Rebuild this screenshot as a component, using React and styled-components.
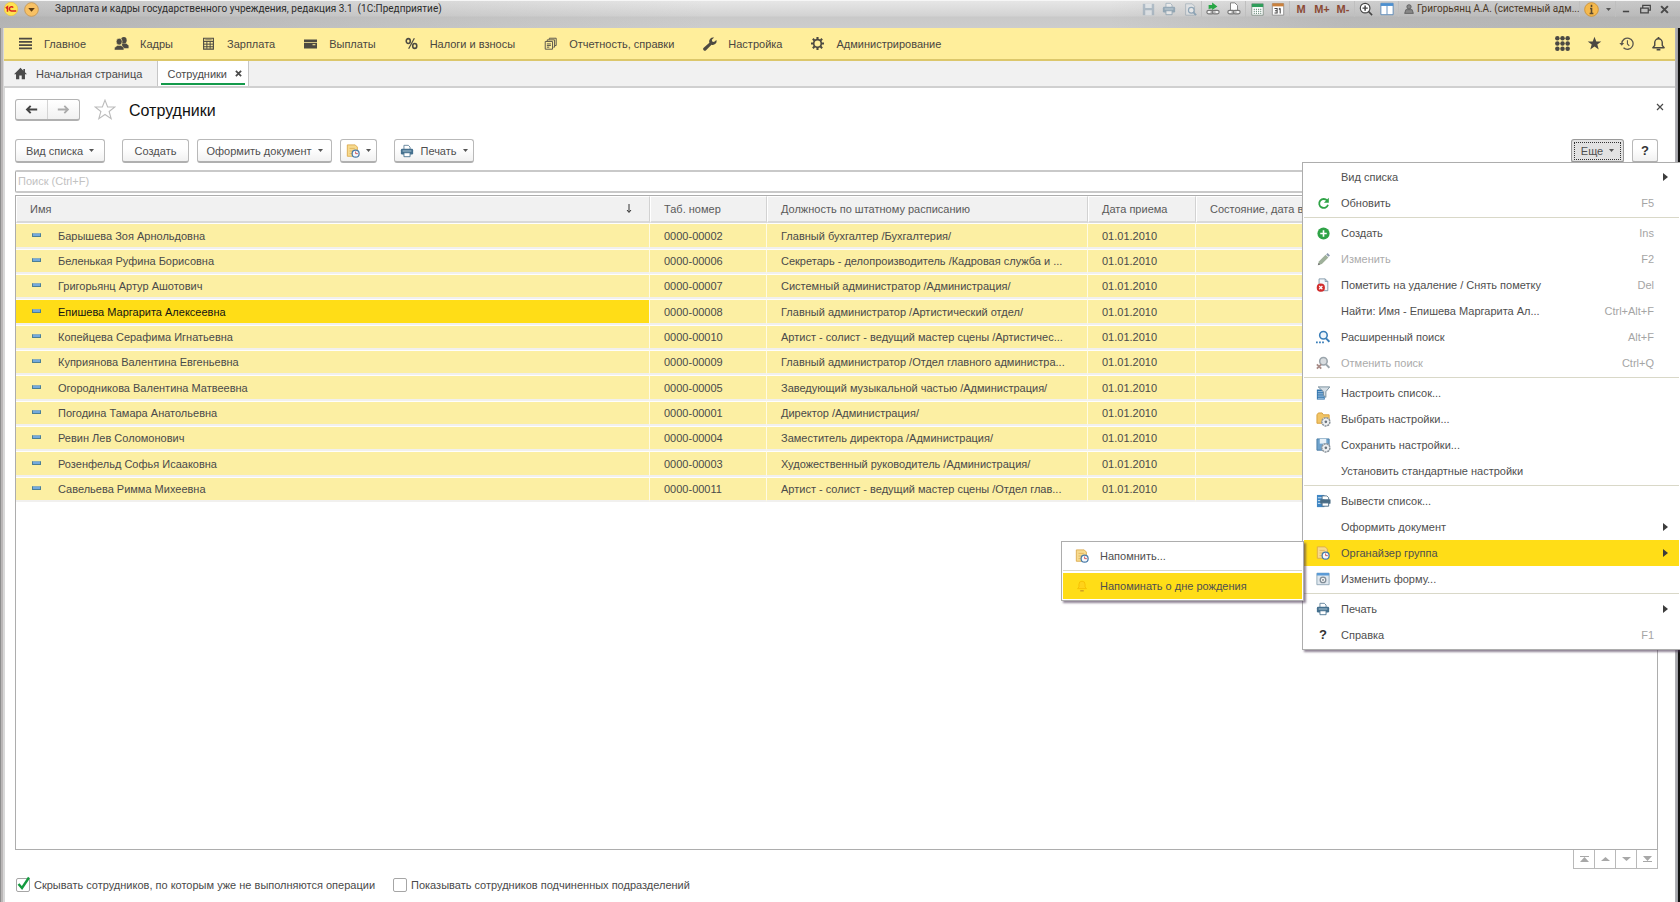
import React from "react";
import styled, { createGlobalStyle, css } from "styled-components";

const GlobalStyle = createGlobalStyle`
  *, *::before, *::after { box-sizing: border-box; }
  body {
    margin: 0;
    background: #fff;
    color: #4a4a4a;
    font: 11px/16px "Liberation Sans", Arial, sans-serif;
  }
  button, input { font: inherit; color: inherit; }
  svg { display: block; flex: none; }
`;

/* ---------- window frame ---------- */

const Window = styled.div`
  display: flex;
  flex-direction: column;
  min-height: 100vh;
  overflow: hidden;
  background: linear-gradient(90deg, #8d8d8d 1px, #bab7b7 1px, #bab7b7 3px, #d8d8d8 3px, #d8d8d8 5px,
    transparent 5px, transparent calc(100% - 5px), #b4b4b8 calc(100% - 5px), #9c9ca2 calc(100% - 2px), #111 calc(100% - 2px)), #fff;
`;

const TitleBar = styled.header`
  display: flex;
  align-items: flex-start;
  height: 28px;
  padding: 0 6px 0 4px;
  border-top: 1px solid #f6f6f6;
  background:
    linear-gradient(90deg, rgba(120, 120, 120, .28), rgba(160, 160, 160, .14) 30%, transparent 42%, transparent 66%, rgba(120, 120, 120, .22) 80%, rgba(120, 120, 120, .28)),
    linear-gradient(#e6e6e6, #dcdcdc 8px, #d2d2d2 15px, #c9c9c9 16px, #cdcdcd);
`;

const TitleLead = styled.div`
  display: flex;
  align-items: center;
  gap: 5px;
  height: 16px;
`;

const TitleText = styled.h1`
  margin: 0 auto 0 8px;
  padding-left: 8px;
  color: #2c2c2c;
  font-family: Roboto, "Liberation Sans", sans-serif;
  font-size: 10px;
  font-weight: 400;
  line-height: 16px;
  white-space: pre;
`;

const TitleGroup = styled.div`
  display: flex;
  align-items: center;
  gap: 1px;
  height: 16px;
  padding: 0 1px;
  border-left: 1px solid ${(p) => (p.$first ? "transparent" : "#bfbfbf")};
`;

const TitleButton = styled.button`
  display: flex;
  align-items: center;
  justify-content: center;
  width: ${(p) => p.$width || 20}px;
  height: 16px;
  padding: 0;
  border: 0;
  background: none;
  color: ${(p) => p.$color || "#444"};
  font-size: 11px;
  font-weight: 700;
  opacity: ${(p) => (p.$dim ? 0.45 : 1)};
`;

const UserButton = styled.button`
  display: flex;
  align-items: center;
  gap: 3px;
  width: 178px;
  height: 16px;
  padding: 0 4px;
  border: 0;
  background: none;
  color: #4a3826;
  font-family: Roboto, "Liberation Sans", sans-serif;
  font-size: 10px;
  white-space: nowrap;
`;

/* ---------- section bar and tabs ---------- */

const Body = styled.div`
  display: flex;
  flex: 1;
  flex-direction: column;
  margin: 0 5px 0 4px;
`;

const SectionBar = styled.nav`
  display: flex;
  align-items: center;
  justify-content: space-between;
  height: 33px;
  padding: 0 9px 0 14px;
  border-bottom: 2px solid #dcc76b;
  background: #ffee9b;
`;

const SectionList = styled.div`
  display: flex;
  gap: 28px;
`;

const SectionLink = styled.a`
  display: flex;
  align-items: center;
  gap: 11px;
  color: #4a4640;
  text-decoration: none;
  white-space: nowrap;
`;

const IconSlot = styled.span`
  display: flex;
  justify-content: center;
  width: 15px;
`;

const QuickButtons = styled.div`
  display: flex;
  gap: 16px;
`;

const GhostButton = styled.button`
  display: flex;
  align-items: center;
  justify-content: center;
  width: 16px;
  height: 16px;
  padding: 0;
  border: 0;
  background: none;
  color: #4a4843;
`;

const TabBar = styled.div`
  display: flex;
  height: 27px;
  border-bottom: 2px solid #d0d0d0;
  background: #f1f1f1;
`;

const HomeTab = styled.a`
  display: flex;
  align-items: center;
  gap: 9px;
  padding: 0 15px 0 10px;
  border-right: 1px solid #c6c6c6;
  color: #4a4a4a;
  text-decoration: none;
`;

const ActiveTab = styled.div`
  display: flex;
  align-items: center;
  gap: 8px;
  padding: 0 6px 0 9px;
  border-right: 1px solid #c6c6c6;
  background: linear-gradient(#149a4b, #149a4b) 50% calc(100% - 1px) / calc(100% - 6px) 2px no-repeat #fff;
`;

const TabClose = styled.button`
  display: flex;
  padding: 0;
  border: 0;
  background: none;
`;

/* ---------- form ---------- */

const Form = styled.main`
  display: flex;
  flex: 1;
  flex-direction: column;
  padding: 11px 17px 9px 11px;
`;

const FormHead = styled.div`
  display: flex;
  align-items: center;
  height: 22px;
`;

const HistoryButtons = styled.div`
  display: flex;
  border: 1px solid #b4b4b4;
  border-bottom: 2px solid #b0b0b0;
  border-radius: 3px;
  background: linear-gradient(#fff, #f1f1f1);
`;

const HistoryButton = styled.button`
  display: flex;
  align-items: center;
  justify-content: center;
  width: 31px;
  height: 19px;
  padding: 0;
  border: 0;
  background: none;
  & + & { width: 32px; border-left: 1px solid #d4d4d4; }
`;

const StarButton = styled(GhostButton)`
  width: 22px;
  height: 22px;
  margin: 0 13px 0 14px;
`;

const FormTitle = styled.h2`
  flex: 1;
  margin: 0;
  padding-top: 2px;
  color: #111;
  font-size: 16px;
  font-weight: 400;
  line-height: 22px;
`;

const FormClose = styled(GhostButton)`
  align-self: flex-start;
  margin-right: -10px;
`;

const Toolbar = styled.div`
  display: flex;
  align-items: center;
  justify-content: space-between;
  margin-top: 18px;
`;

const ToolGroup = styled.div`
  position: relative;
  display: flex;
  gap: 8px;
`;

const ToolButton = styled.button`
  display: flex;
  align-items: center;
  justify-content: center;
  gap: 6px;
  width: ${(p) => p.$width}px;
  height: 24px;
  margin-right: ${(p) => (p.$spaced ? 9 : 0)}px;
  padding: 0;
  border: 1px solid #b9b9b9;
  border-bottom: 2px solid #b0b0b0;
  border-radius: 3px;
  background: linear-gradient(#fff 40%, #f1f1f1);
  color: #4f4f4f;
  white-space: nowrap;
  ${(p) => p.$pressed && css`
    border-color: #9a9a9a;
    background: #e2e2e2;
    outline: 1px dotted #333;
    outline-offset: -4px;
  `}
`;

const HelpMark = styled.b`
  color: #333;
  font-size: 13px;
`;

const SearchInput = styled.input`
  height: 23px;
  margin-top: 7px;
  padding: 0 2px 1px;
  border: 1px solid #c9c9c9;
  border-width: 2px 1px;
  border-left-color: #a9a9a9;
  border-radius: 2px;
  background: #fff;
  &::placeholder { color: #c2c2c2; opacity: 1; }
`;

/* ---------- employee list ---------- */

const ListFrame = styled.section`
  flex: 1;
  margin-top: 2px;
  border: 1px solid #adadad;
`;

const EmployeeTable = styled.table`
  width: 100%;
  table-layout: fixed;
  border-collapse: separate;
  border-spacing: 0;
`;

const Col = styled.col`
  width: ${(p) => p.$width};
`;

const HeadCell = styled.th`
  height: 27px;
  padding: 0 13px;
  border: 1px solid #fff;
  border-right-color: #d2d2d2;
  border-bottom: 2px solid #d9d9d9;
  background: #f1f1f1;
  color: #5a5a5a;
  font-weight: 400;
  text-align: left;
  white-space: nowrap;
`;

const SortHead = styled.span`
  display: flex;
  align-items: center;
  justify-content: space-between;
  padding-right: 4px;
`;

const Row = styled.tr`
  height: 25px;
  &:nth-child(3n + 1) { height: 26px; }
`;

const Cell = styled.td`
  overflow: hidden;
  padding: 0 14px;
  border-top: 1px solid #fefefe;
  border-right: 1px solid #fffbe4;
  border-bottom: 2px solid #f1f0ee;
  background: #fcefa3;
  line-height: 16px;
  text-overflow: ellipsis;
  white-space: nowrap;
  ${(p) => p.$current && css`
    background: #ffdd17;
    color: #141414;
  `}
`;

const NameCell = styled.span`
  display: flex;
  align-items: center;
  gap: 17px;
  padding-left: 2px;
`;

const RowMark = styled.i`
  width: 9px;
  height: 4px;
  margin-bottom: 2px;
  border: 1px solid #4b7f95;
  border-top-color: #89aebd;
  background: #74a9dc;
`;

const Pager = styled.div`
  display: flex;
  align-self: flex-end;
  border: solid #b9b9b9;
  border-width: 0 0 1px 1px;
`;

const PagerButton = styled.button`
  display: flex;
  align-items: center;
  justify-content: center;
  width: 21px;
  height: 18px;
  padding: 0;
  border: 0;
  border-right: 1px solid #b9b9b9;
  background: #fff;
`;

const Filters = styled.div`
  display: flex;
  gap: 18px;
  margin: 8px 0 0 1px;
`;

const FilterLabel = styled.label`
  display: flex;
  align-items: center;
  gap: 4px;
`;

const CheckBox = styled.input`
  appearance: none;
  width: 14px;
  height: 14px;
  margin: 0;
  border: 1px solid #a6a6a6;
  border-radius: 2px;
  background: #fff;
`;

const CheckWrap = styled.span`
  position: relative;
  display: flex;
  svg { position: absolute; left: 1px; top: -2px; pointer-events: none; }
`;

/* ---------- menus ---------- */

const menuSurface = css`
  position: absolute;
  z-index: 2;
  margin: 0;
  padding: 1px;
  border: 1px solid #adadad;
  background: #fff;
  box-shadow: 2px 2px 2px rgba(70, 50, 80, .6);
  list-style: none;
`;

const MoreMenu = styled.ul`
  ${menuSurface}
  top: 23px;
  right: -23px;
  width: 379px;
`;

const SubMenu = styled.ul`
  ${menuSurface}
  top: 1px;
  right: 100%;
  width: 243px;
`;

const MenuEntry = styled.li`
  position: relative;
`;

const MenuLine = styled.li`
  height: 4px;
  padding-top: 1px;
  &::before { content: ""; display: block; height: 1px; background: #d9d8c8; }
`;

const MenuButton = styled.button`
  display: grid;
  grid-template-columns: 16px 1fr auto 8px;
  align-items: center;
  width: 100%;
  height: 26px;
  padding: 0 10px 0 11px;
  border: 0;
  background: ${(p) => (p.$active ? "#ffdd17" : "none")};
  color: ${(p) => (p.disabled ? "#ababab" : "#4f4f4f")};
  text-align: left;
  white-space: nowrap;
  svg { justify-self: center; }
`;

const MenuIcon = styled.span`
  display: flex;
  justify-content: center;
`;

const MenuLabel = styled.span`
  padding-left: 10px;
`;

const Shortcut = styled.kbd`
  padding-right: 7px;
  color: #a5a5a5;
  font: inherit;
`;

/* ---------- drawings ---------- */

const Svg = ({ s = 14, v = 16, children, ...rest }) => (
  <svg width={s} height={s} viewBox={`0 0 ${v} ${v}`} fill="none" aria-hidden="true" {...rest}>{children}</svg>
);

const Caret = () => <svg width="5" height="3" viewBox="0 0 5 3" aria-hidden="true"><path d="M0 0h5L2.500 3z" fill="#555" /></svg>;
const ArrowRight = () => <svg width="5" height="8" viewBox="0 0 5 8" aria-hidden="true"><path d="M0 0l5 4-5 4z" fill="#3c3c3c" /></svg>;
const Cross = ({ s = 7, w = 1.5 }) => <Svg s={s} v={8}><path d="M1 1l6 6M7 1L1 7" stroke="#4a4a4a" strokeWidth={w} /></Svg>;

const Burger = () => <Svg s={13}><path d="M0 2h16M0 6h16M0 10h16M0 14h16" stroke="#4d4a42" strokeWidth="2" /></Svg>;
const People = () => (
  <Svg s={15}><g fill="#4d4a42"><ellipse cx="10.500" cy="4.500" rx="3" ry="3.500" /><path d="M8.500 8h4.500l2.500 2v3H9z" /><ellipse cx="5.500" cy="6" rx="3.200" ry="3.700" stroke="#ffee9b" strokeWidth=".7" /><path d="M.5 15v-2.500l3-2.500h4l3 2.500V15z" stroke="#ffee9b" strokeWidth=".5" /></g></Svg>
);
const Calc = () => (
  <Svg s={13}><path d="M2 1.500h12v13.500H2z" stroke="#4d4a42" strokeWidth="1.400" /><path d="M2 5.500h12M2 8.800h12M2 12h12M6 5.500v9M10 5.500v9" stroke="#4d4a42" strokeWidth="1.200" /><path d="M4 3.500h8" stroke="#4d4a42" /></Svg>
);
const Card = () => <Svg s={13}><path d="M0 3h16v3H0zM0 7h16v7H0z" fill="#4d4a42" /><path d="M10.500 9.500H14" stroke="#ffee9b" strokeWidth="1.300" /></Svg>;
const Percent = () => (
  <Svg s={13}><ellipse cx="4" cy="5" rx="2.500" ry="3" stroke="#4d4a42" strokeWidth="1.900" /><ellipse cx="12" cy="11" rx="2.500" ry="3" stroke="#4d4a42" strokeWidth="1.900" /><path d="M11.500 1.500l-7 13" stroke="#4d4a42" strokeWidth="1.500" /></Svg>
);
const Reports = () => (
  <Svg s={13}><path d="M1.500 5.500h9v9.500h-9zM4 5V3.500h9v9h-1.500M6.500 3V1.500h8.500v9h-1.500M3.500 8.500h5M3.500 10.500h5M3.500 12.500h3" stroke="#5b574c" strokeWidth="1.200" /></Svg>
);
const Wrench = () => (
  <Svg><path d="M15.300 3.300l-2.800 2.300-2-.6-.4-2L12.700.7A4.500 4.500 0 0 0 7.300 6.500L.8 12.300a1.900 1.900 0 0 0 2.700 2.800l6.200-6.300a4.400 4.400 0 0 0 5.600-5.500z" fill="#4d4a42" /></Svg>
);
const Cog = () => (
  <Svg s={13}><circle cx="8" cy="8" r="4.700" stroke="#4d4a42" strokeWidth="2.100" /><path d="M8 0v3M8 13v3M0 8h3M13 8h3M2.300 2.300l2.200 2.200M11.500 11.500l2.200 2.200M13.700 2.300l-2.200 2.200M4.500 11.500l-2.200 2.200" stroke="#4d4a42" strokeWidth="2.600" /></Svg>
);
const Home = () => <Svg s={13}><path d="M8 1L0 9h2.500v6h4v-4.500h3V15h4V9H16l-2.500-2.500V2.500h-2v2z" fill="#4a4a4a" /></Svg>;
const Dots = () => (
  <Svg s={15}><g fill="#4a4843">{[2.5, 8, 13.5].map((y) => [2.5, 8, 13.5].map((x) => <circle key={`${x}-${y}`} cx={x} cy={y} r="2.400" />))}</g></Svg>
);
const starPath = "M8 .8l1.900 5h5.300l-4.200 3.300 1.500 5.300L8 11.300l-4.500 3.100L5 9.100.8 5.800h5.300z";
const Star = () => <Svg s={15}><path d={starPath} fill="#4a4843" /></Svg>;
const StarOutline = () => <Svg s={22}><path d={starPath} stroke="#bcbcbc" strokeWidth=".8" /></Svg>;
const History = () => (
  <Svg s={15}><path d="M3 8a6 6 0 1 1 1.800 4.500" stroke="#5b584e" strokeWidth="1.400" /><path d="M.3 7.500h5.200L3 10.500z" fill="#5b584e" /><path d="M9 4.500v4l2 2" stroke="#5b584e" strokeWidth="1.200" /></Svg>
);
const Bell = () => (
  <Svg s={15}><path d="M2 12.500l2-2.500V7a4 4 0 0 1 8 0v3l2 2.500z" stroke="#4a4843" strokeWidth="1.500" strokeLinejoin="round" /><path d="M8 1v2M6 14.500h4" stroke="#4a4843" strokeWidth="1.800" /></Svg>
);

const ArrowLeftIcon = () => <Svg s={13}><path d="M15 8H3M7 3.500L2.500 8 7 12.500" stroke="#444" strokeWidth="2.400" /></Svg>;
const ArrowRightIcon = () => <Svg s={13}><path d="M1 8h12M9 3.500L13.500 8 9 12.500" stroke="#ababab" strokeWidth="2.200" /></Svg>;

const Printer = () => (
  <Svg><path d="M4.500 6V1.500h5l2 2V6" fill="#fff" stroke="#5d7f98" /><rect x="1" y="5.500" width="14" height="6.500" rx="1.500" fill="#45708e" /><path d="M3 8h10" stroke="#bcd3e2" /><path d="M4.500 10h7v4.500h-7z" fill="#fff" stroke="#45708e" /></Svg>
);
const NoteClock = () => (
  <Svg><path d="M1.500 1h9L13 3.500V14H1.500z" fill="#f7da8e" stroke="#dba94b" /><path d="M4 5h6M4 8h4M4 11h3" stroke="#dfb45c" /><circle cx="11" cy="11" r="4" fill="#f5f9fd" stroke="#4779a8" strokeWidth="1.400" /><path d="M11 8.500V11h2.500" stroke="#c44" /></Svg>
);
const Refresh = () => <Svg s={13}><path d="M12.500 4.500A5.500 5.500 0 1 0 13.500 9.500" stroke="#2fa347" strokeWidth="2.200" /><path d="M14.500 1v6h-6z" fill="#2fa347" /></Svg>;
const AddCircle = () => <Svg s={13}><circle cx="8" cy="8" r="7.500" fill="#2fa347" /><path d="M8 4v8M4 8h8" stroke="#fff" strokeWidth="2" /></Svg>;
const Pencil = () => <Svg s={13}><path d="M1 15l1.500-5 8-8 3.500 3.500-8 8z" fill="#9fb09a" /><path d="M11.300 1.700L13 0l3 3-1.700 1.700z" fill="#8b98ad" /><path d="M1 15l1-3 2 2z" fill="#777" /></Svg>;
const DocDelete = () => (
  <Svg><path d="M3.500 1h7l3 3v10.500h-10z" fill="#f4f7fa" stroke="#7b93a6" /><path d="M10.500 1v3h3" stroke="#7b93a6" /><circle cx="5.500" cy="11" r="4.700" fill="#d22c2c" /><path d="M3.700 9.200l3.600 3.600M7.300 9.200l-3.600 3.600" stroke="#fff" strokeWidth="1.400" /></Svg>
);
const Lens = ({ c = "#397db8", off }) => (
  <Svg><circle cx="8.500" cy="6" r="4.300" fill={off ? "#d9dde0" : "#eef5fb"} stroke={c} strokeWidth="1.800" /><path d="M11.500 9.500l3.800 4" stroke={c} strokeWidth="2.200" />{off ? <path d="M1 9.500l5 5M6 9.500l-5 5" stroke="#a98d89" strokeWidth="2" /> : <path d="M0 14h2M3.500 14h2M7 14h2" stroke={c} strokeWidth="2" />}</Svg>
);
const ListFilter = () => (
  <Svg><path d="M1 4h9v11.500H1z" fill="#2f73ad" /><path d="M2 6.500h7M2 9h7M2 11.500h7M2 14h7" stroke="#c9e1f4" strokeWidth=".9" /><path d="M2.500 1h13.300l-4.500 5.500V13L8.500 10.500v-4z" fill="#d5dee5" stroke="#6f8696" /></Svg>
);
const MiniGear = () => (
  <><circle cx="10.500" cy="10.500" r="4.300" fill="#eef0f2" stroke="#8b949c" strokeWidth="1.600" strokeDasharray="2.200 .7" /><circle cx="10.500" cy="10.500" r="1.400" fill="#6a747d" /></>
);
const FolderGear = () => <Svg s={15}><path d="M1 3l1.500-2h4L8 3h6v9H1z" fill="#f2c566" stroke="#d69f3c" /><MiniGear /></Svg>;
const DiskGear = () => <Svg s={15}><path d="M1 1h13v12H1z" fill="#6fa3cd" stroke="#4b7ca5" /><path d="M4 1h7v5H4z" fill="#e6f0f8" /><MiniGear /></Svg>;
const ListPrint = () => (
  <Svg s={15}><path d="M1 1h8v13H1z" fill="#3f86c4" /><path d="M2 4h6M2 7h6M2 10h6" stroke="#cfe4f5" /><path d="M6.500 5.500V2h5l2 2v2" fill="#fff" stroke="#55738a" /><rect x="4.500" y="5.500" width="11" height="5" rx="1" fill="#4a6c85" /><path d="M6.500 9.500h7V13h-7z" fill="#fff" stroke="#4a6c85" /></Svg>
);
const FormGear = () => (
  <Svg><path d="M1 1.500h14v13H1z" fill="#dfe7ee" stroke="#8ba3b5" /><path d="M1 1h14v3H1z" fill="#5b9bd6" /><circle cx="8" cy="9" r="3.200" stroke="#808c96" strokeWidth="1.500" fill="#f4f4f4" /><circle cx="8" cy="9" r="1" fill="#707a82" /></Svg>
);
const GoldBell = () => <Svg><path d="M3 11l1.500-2V6a3.500 3.500 0 0 1 7 0v3l1.500 2z" fill="#ffd21a" stroke="#f5bf00" /><path d="M6 13.500h4" stroke="#c9962a" strokeWidth="1.500" /></Svg>;
const Tick = () => <svg width="14" height="14" viewBox="0 0 14 14" fill="none" aria-hidden="true"><path d="M1.500 8l3.500 4L12 1.500" stroke="#149a3f" strokeWidth="2.400" /></svg>;
const SortArrow = () => <svg width="6" height="10" viewBox="0 0 6 10" aria-hidden="true"><path d="M3 0v8M1 6l2 2.500L5 6" stroke="#333" fill="none" /></svg>;

const Logo = () => (
  <Svg s={14}><circle cx="8" cy="8" r="7.700" fill="#ffe452" stroke="#f2c029" strokeWidth=".6" /><path d="M2 7l2-1.500V11M10.500 6.500A2.400 2.400 0 1 0 8.500 10.300H14" stroke="#d8231f" strokeWidth="1.700" /></Svg>
);
const RoundCaret = () => <Svg s={15}><circle cx="8" cy="8" r="7.300" fill="#f8c164" stroke="#c99a55" /><path d="M4.500 6.500h7L8 10.500z" fill="#5b3a12" /></Svg>;
const Disk = () => <Svg s={13}><path d="M1 1h14v14H1z" fill="#7b96ad" /><path d="M4 1h8v5H4zM4 9h8v6H4z" fill="#e4ecf2" /></Svg>;
const Preview = () => <Svg s={13}><path d="M2 1h8l3 3v11H2z" fill="#e9eef2" stroke="#6c8598" /><circle cx="9" cy="9" r="3.500" stroke="#3f6f95" strokeWidth="1.500" fill="#fff" /><path d="M11.500 11.500l3.500 3.500" stroke="#3f6f95" strokeWidth="2" /></Svg>;
const Link = ({ page }) => (
  <Svg>{page && <path d="M4 10V1h5l3 3v6" fill="#fff" stroke="#777" />}<rect x="1" y="9.500" width="8" height="4" rx="2" stroke="#777" fill="#f4f4f4" strokeWidth="1.300" /><rect x="7" y="9.500" width="8" height="4" rx="2" stroke="#777" fill="#f4f4f4" strokeWidth="1.300" /><path d="M5 11.500h6" stroke="#777" />{!page && <path d="M3 8V3.500h4V.5l6 4.500-6 4V7z" fill="#27a544" />}</Svg>
);
const GreenCalc = () => <Svg s={13}><path d="M1 1h14v14H1z" fill="#fff" stroke="#7a8a80" /><path d="M1 1h14v4H1z" fill="#2f9e5b" /><path d="M4 7v7M6.700 7v7M9.400 7v7M12 7v7" stroke="#6e8f7d" strokeWidth="1.300" strokeDasharray="1.500 1" /></Svg>;
const Calendar = () => (
  <Svg><path d="M1.500 2h13v13h-13z" fill="#fff" stroke="#8c8c8c" /><path d="M1.500 1.500h13V5h-13z" fill="#c9813d" /><path d="M4 7.500h3v5H4M4.500 10H7M10.500 7v6M9 8.500l1.500-1.500" stroke="#444" strokeWidth="1.200" /></Svg>
);
const ZoomIn = () => <Svg><circle cx="7" cy="7" r="5.500" stroke="#444" strokeWidth="1.300" fill="#fff" /><path d="M7 4v6M4 7h6M11 11l4 4" stroke="#444" strokeWidth="1.700" /></Svg>;
const Panels = () => <Svg><path d="M1 1.500h14v13H1zM8 4v10" fill="#fff" stroke="#5383b5" /><path d="M1 1.500h14v3H1z" fill="#4b8fd0" /></Svg>;
const Person = () => <Svg s={10}><circle cx="8" cy="4.500" r="3.500" fill="#888" stroke="#444" /><path d="M1 15l2-6h10l2 6z" fill="#888" stroke="#444" /></Svg>;
const Info = () => <Svg s={15}><circle cx="8" cy="8" r="7.300" fill="#f5b94d" stroke="#cf9436" /><path d="M8 3v2.200M6.500 7H8v5M6 12.300h4" stroke="#5a4a30" strokeWidth="1.700" /></Svg>;
const Minimize = () => <Svg s={10}><path d="M3 12h10" stroke="#444" strokeWidth="2.500" /></Svg>;
const Restore = () => <Svg s={11}><path d="M4 5V2h11v7h-3M1 6h11v7H1z" stroke="#444" strokeWidth="1.800" /></Svg>;

const PagerIcon = ({ kind }) => (
  <svg width="9" height="6" viewBox="0 0 9 6" fill="#a8a8a8" aria-hidden="true">
    {kind === "first" && <path d="M0 0h9v1H0zM4.500 1L9 6H0z" />}
    {kind === "prev" && <path d="M4.500 1L9 5H0z" />}
    {kind === "next" && <path d="M0 1h9L4.500 5z" />}
    {kind === "last" && <path d="M0 0h9L4.500 5zM0 5h9v1H0z" />}
  </svg>
);

/* ---------- data ---------- */

const sections = [
  ["Главное", Burger], ["Кадры", People], ["Зарплата", Calc], ["Выплаты", Card],
  ["Налоги и взносы", Percent], ["Отчетность, справки", Reports], ["Настройка", Wrench], ["Администрирование", Cog],
];

const employees = [
  ["Барышева Зоя Арнольдовна", "0000-00002", "Главный бухгалтер /Бухгалтерия/"],
  ["Беленькая Руфина Борисовна", "0000-00006", "Секретарь - делопроизводитель /Кадровая служба и ..."],
  ["Григорьянц Артур Ашотович", "0000-00007", "Системный администратор /Администрация/"],
  ["Епишева Маргарита Алексеевна", "0000-00008", "Главный администратор /Артистический отдел/"],
  ["Копейцева Серафима Игнатьевна", "0000-00010", "Артист - солист - ведущий мастер сцены /Артистичес..."],
  ["Куприянова Валентина Евгеньевна", "0000-00009", "Главный администратор /Отдел главного администра..."],
  ["Огородникова Валентина Матвеевна", "0000-00005", "Заведующий музыкальной частью /Администрация/"],
  ["Погодина Тамара Анатольевна", "0000-00001", "Директор /Администрация/"],
  ["Ревин Лев Соломонович", "0000-00004", "Заместитель директора /Администрация/"],
  ["Розенфельд Софья Исааковна", "0000-00003", "Художественный руководитель /Администрация/"],
  ["Савельева Римма Михеевна", "0000-00011", "Артист - солист - ведущий мастер сцены /Отдел глав..."],
];

const moreMenu = [
  { label: "Вид списка", sub: true },
  { label: "Обновить", key: "F5", icon: <Refresh /> },
  null,
  { label: "Создать", key: "Ins", icon: <AddCircle /> },
  { label: "Изменить", key: "F2", icon: <Pencil />, off: true },
  { label: "Пометить на удаление / Снять пометку", key: "Del", icon: <DocDelete /> },
  { label: "Найти: Имя - Епишева Маргарита Ал...", key: "Ctrl+Alt+F" },
  { label: "Расширенный поиск", key: "Alt+F", icon: <Lens /> },
  { label: "Отменить поиск", key: "Ctrl+Q", icon: <Lens c="#9ba5ac" off />, off: true },
  null,
  { label: "Настроить список...", icon: <ListFilter /> },
  { label: "Выбрать настройки...", icon: <FolderGear /> },
  { label: "Сохранить настройки...", icon: <DiskGear /> },
  { label: "Установить стандартные настройки" },
  null,
  { label: "Вывести список...", icon: <ListPrint /> },
  { label: "Оформить документ", sub: true },
  {
    label: "Органайзер группа", sub: true, active: true, icon: <NoteClock />,
    items: [
      { label: "Напомнить...", icon: <NoteClock /> },
      null,
      { label: "Напоминать о дне рождения", icon: <GoldBell />, active: true },
    ],
  },
  { label: "Изменить форму...", icon: <FormGear /> },
  null,
  { label: "Печать", sub: true, icon: <Printer /> },
  { label: "Справка", key: "F1", icon: <HelpMark>?</HelpMark> },
];

const MenuItems = ({ items }) => items.map((item, i) => item === null ? <MenuLine key={i} role="separator" /> : (
  <MenuEntry key={i} role="none">
    <MenuButton type="button" role="menuitem" disabled={item.off} $active={item.active}>
      <MenuIcon>{item.icon}</MenuIcon>
      <MenuLabel>{item.label}</MenuLabel>
      <Shortcut>{item.key}</Shortcut>
      {item.sub && <ArrowRight />}
    </MenuButton>
    {item.items && <SubMenu role="menu" aria-label={item.label}><MenuItems items={item.items} /></SubMenu>}
  </MenuEntry>
));

export default function App() {
  return (
    <>
      <GlobalStyle />
      <Window>
        <TitleBar>
          <TitleLead>
            <Logo />
            <TitleButton type="button" aria-label="Главное меню" $width={16}><RoundCaret /></TitleButton>
          </TitleLead>
          <TitleText>{"Зарплата и кадры государственного учреждения, редакция 3.1  (1С:Предприятие)"}</TitleText>
          <TitleGroup $first>
            <TitleButton type="button" aria-label="Сохранить" $dim><Disk /></TitleButton>
            <TitleButton type="button" aria-label="Печать" $dim><Printer /></TitleButton>
            <TitleButton type="button" aria-label="Просмотр" $dim><Preview /></TitleButton>
          </TitleGroup>
          <TitleGroup>
            <TitleButton type="button" aria-label="Получить ссылку"><Link /></TitleButton>
            <TitleButton type="button" aria-label="Перейти по ссылке"><Link page /></TitleButton>
          </TitleGroup>
          <TitleGroup>
            <TitleButton type="button" aria-label="Калькулятор"><GreenCalc /></TitleButton>
            <TitleButton type="button" aria-label="Календарь"><Calendar /></TitleButton>
          </TitleGroup>
          <TitleGroup>
            <TitleButton type="button" $color="#8a4a34">M</TitleButton>
            <TitleButton type="button" $color="#8a4a34">M+</TitleButton>
            <TitleButton type="button" $color="#8a4a34">M-</TitleButton>
          </TitleGroup>
          <TitleGroup>
            <TitleButton type="button" aria-label="Масштаб"><ZoomIn /></TitleButton>
            <TitleButton type="button" aria-label="Панели"><Panels /></TitleButton>
          </TitleGroup>
          <TitleGroup>
            <UserButton type="button"><Person />Григорьянц А.А. (системный адм...</UserButton>
          </TitleGroup>
          <TitleGroup>
            <TitleButton type="button" aria-label="Информация"><Info /></TitleButton>
            <TitleButton type="button" aria-label="Ещё" $width={12}><Caret /></TitleButton>
          </TitleGroup>
          <TitleGroup>
            <TitleButton type="button" aria-label="Свернуть" $width={18}><Minimize /></TitleButton>
            <TitleButton type="button" aria-label="Развернуть" $width={18}><Restore /></TitleButton>
            <TitleButton type="button" aria-label="Закрыть" $width={18}><Cross s={9} w={1.8} /></TitleButton>
          </TitleGroup>
        </TitleBar>
        <Body>
          <SectionBar>
            <SectionList>
              {sections.map(([label, Icon]) => (
                <SectionLink key={label} href="#"><IconSlot><Icon /></IconSlot>{label}</SectionLink>
              ))}
            </SectionList>
            <QuickButtons>
              <GhostButton type="button" aria-label="Меню функций"><Dots /></GhostButton>
              <GhostButton type="button" aria-label="Избранное"><Star /></GhostButton>
              <GhostButton type="button" aria-label="История"><History /></GhostButton>
              <GhostButton type="button" aria-label="Оповещения"><Bell /></GhostButton>
            </QuickButtons>
          </SectionBar>
          <TabBar>
            <HomeTab href="#"><Home />Начальная страница</HomeTab>
            <ActiveTab>Сотрудники<TabClose type="button" aria-label="Закрыть вкладку"><Cross w={2} /></TabClose></ActiveTab>
          </TabBar>
          <Form>
            <FormHead>
              <HistoryButtons>
                <HistoryButton type="button" aria-label="Назад"><ArrowLeftIcon /></HistoryButton>
                <HistoryButton type="button" aria-label="Вперед"><ArrowRightIcon /></HistoryButton>
              </HistoryButtons>
              <StarButton type="button" aria-label="Добавить в избранное"><StarOutline /></StarButton>
              <FormTitle>Сотрудники</FormTitle>
              <FormClose type="button" aria-label="Закрыть"><Cross s={8} w={1.2} /></FormClose>
            </FormHead>
            <Toolbar>
              <ToolGroup>
                <ToolButton type="button" $width={90} $spaced>Вид списка<Caret /></ToolButton>
                <ToolButton type="button" $width={67}>Создать</ToolButton>
                <ToolButton type="button" $width={135}>Оформить документ<Caret /></ToolButton>
                <ToolButton type="button" $width={37} $spaced aria-label="Органайзер"><NoteClock /><Caret /></ToolButton>
                <ToolButton type="button" $width={80}><Printer />Печать<Caret /></ToolButton>
              </ToolGroup>
              <ToolGroup>
                <ToolButton type="button" $width={53} $pressed aria-haspopup="menu" aria-expanded="true">Еще<Caret /></ToolButton>
                <ToolButton type="button" $width={26} aria-label="Справка"><HelpMark>?</HelpMark></ToolButton>
                <MoreMenu role="menu" aria-label="Еще"><MenuItems items={moreMenu} /></MoreMenu>
              </ToolGroup>
            </Toolbar>
            <SearchInput type="text" aria-label="Поиск" placeholder="Поиск (Ctrl+F)" />
            <ListFrame>
              <EmployeeTable>
                <colgroup>
                  <Col $width="634px" /><Col $width="117px" /><Col $width="321px" /><Col $width="108px" /><Col $width="auto" />
                </colgroup>
                <thead>
                  <tr>
                    <HeadCell scope="col"><SortHead>Имя<SortArrow /></SortHead></HeadCell>
                    <HeadCell scope="col">Таб. номер</HeadCell>
                    <HeadCell scope="col">Должность по штатному расписанию</HeadCell>
                    <HeadCell scope="col">Дата приема</HeadCell>
                    <HeadCell scope="col">Состояние, дата в</HeadCell>
                  </tr>
                </thead>
                <tbody>
                  {employees.map(([name, number, post]) => (
                    <Row key={number}>
                      <Cell $current={number === "0000-00008"}><NameCell><RowMark />{name}</NameCell></Cell>
                      <Cell>{number}</Cell>
                      <Cell>{post}</Cell>
                      <Cell>01.01.2010</Cell>
                      <Cell />
                    </Row>
                  ))}
                </tbody>
              </EmployeeTable>
            </ListFrame>
            <Pager>
              {[["first", "В начало"], ["prev", "Вверх"], ["next", "Вниз"], ["last", "В конец"]].map(([kind, label]) => (
                <PagerButton key={kind} type="button" aria-label={label}><PagerIcon kind={kind} /></PagerButton>
              ))}
            </Pager>
            <Filters>
              <FilterLabel><CheckWrap><CheckBox type="checkbox" defaultChecked /><Tick /></CheckWrap>Скрывать сотрудников, по которым уже не выполняются операции</FilterLabel>
              <FilterLabel><CheckWrap><CheckBox type="checkbox" /></CheckWrap>Показывать сотрудников подчиненных подразделений</FilterLabel>
            </Filters>
          </Form>
        </Body>
      </Window>
    </>
  );
}
